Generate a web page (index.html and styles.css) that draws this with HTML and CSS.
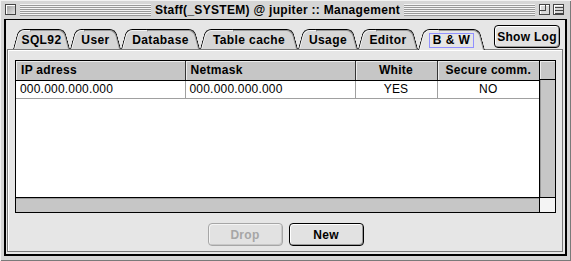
FILE: index.html
```html
<!DOCTYPE html>
<html lang="en">
<head>
    <meta charset="UTF-8">
    <title>Staff(_SYSTEM) @ jupiter :: Management</title>
    <link rel="stylesheet" href="styles.css">
</head>
<body>
    <div class="window">
        <div class="titlebar">
            <span class="box closebox"></span>
            <span class="stripes"></span>
            <span class="title">Staff(_SYSTEM) @ jupiter :: Management</span>
            <span class="stripes"></span>
            <span class="box zoombox"><span></span></span>
            <span class="box shadebox"></span>
        </div>
        <div class="frame">
            <div class="tabbar">
                <div class="tabs">
                    <div class="tab" style="width:57px">SQL92</div>
                    <div class="tab" style="width:51px">User</div>
                    <div class="tab" style="width:79px">Database</div>
                    <div class="tab" style="width:98px">Table cache</div>
                    <div class="tab" style="width:60px">Usage</div>
                    <div class="tab" style="width:60px">Editor</div>
                    <div class="tab selected" style="width:67px"><span class="focus">B &amp; W</span></div>
                </div>
                <button class="btn showlog">Show Log</button>
            </div>
            <div class="panel">
                <div class="grid">
                    <div class="list">
                        <table>
                            <thead>
                                <tr>
                                    <th class="col-ip">IP adress</th>
                                    <th class="col-mask">Netmask</th>
                                    <th class="col-white center">White</th>
                                    <th class="col-secure center">Secure comm.</th>
                                </tr>
                            </thead>
                            <tbody>
                                <tr>
                                    <td>000.000.000.000</td>
                                    <td>000.000.000.000</td>
                                    <td class="center">YES</td>
                                    <td class="center">NO</td>
                                </tr>
                            </tbody>
                        </table>
                    </div>
                    <div class="vscroll"><div class="vscroll-head"></div></div>
                    <div class="hscroll"></div>
                    <div class="corner"></div>
                </div>
                <div class="actions">
                    <button class="btn" disabled>Drop</button>
                    <button class="btn">New</button>
                </div>
            </div>
        </div>
    </div>
</body>
</html>
```

FILE: styles.css
```css
body {
    margin: 0;
    background: #fff;
    font-family: "Liberation Sans", Arial, sans-serif;
    color: #000;
}
.window {
    width: 571px;
    height: 261px;
    box-sizing: border-box;
    display: flex;
    flex-direction: column;
    padding: 0 4px 5px 4px;
    background: #d6d6d6;
    box-shadow: inset 1px 1px 0 #f2f2f2, inset -1px -1px 0 #7a7a7a;
}
.titlebar {
    height: 19px;
    margin: 0 -4px;
    padding: 0 7px 0 5px;
    display: flex;
    align-items: center;
}
.box {
    width: 9px;
    height: 9px;
    border: 1px solid #444;
    background: linear-gradient(135deg, #9a9a9a, #e4e4e4);
    box-shadow: inset 1px 1px 0 #fff;
    flex: none;
    position: relative;
}
.closebox {
    margin-right: 4px;
}
.zoombox {
    margin-left: 4px;
    background: #d8d8d8;
}
.zoombox span {
    position: absolute;
    left: 0;
    top: 0;
    width: 5px;
    height: 5px;
    border-right: 1px solid #444;
    border-bottom: 1px solid #444;
}
.shadebox {
    margin-left: 3px;
    background: repeating-linear-gradient(#d8d8d8 0 2px, #444 2px 3px);
}
.stripes {
    flex: 1;
    height: 12px;
    background: repeating-linear-gradient(#f4f4f4 0 1px, #999 1px 2px);
}
.title {
    padding: 0 4px;
    font-size: 12px;
    font-weight: bold;
    letter-spacing: 0.3px;
    white-space: nowrap;
}
.frame {
    flex: 1;
    display: flex;
    flex-direction: column;
    background: #e6e6e6;
    border: 2px solid #000;
    border-top-width: 1px;
}
.tabbar {
    height: 29px;
    display: flex;
    padding-left: 7px;
    position: relative;
    z-index: 1;
}
.tabs {
    display: flex;
    align-items: flex-end;
}
.tab {
    position: relative;
    z-index: 0;
    height: 20px;
    box-sizing: border-box;
    display: flex;
    align-items: center;
    justify-content: center;
    padding-top: 2px;
    font-size: 12px;
    font-weight: bold;
    letter-spacing: 0.4px;
    white-space: nowrap;
}
.tab::before,
.tab::after {
    content: '';
    position: absolute;
    top: 0;
    bottom: 0;
    width: 60%;
    z-index: -1;
    background: #d6d6d6;
    border-top: 1px solid #000;
}
.tab::before {
    left: 0;
    border-left: 1px solid #000;
    border-top-left-radius: 6px;
    transform-origin: bottom left;
    transform: skewX(-15deg);
    box-shadow: inset 1px 1px 0 #f4f4f4;
}
.tab::after {
    right: 0;
    border-right: 1px solid #000;
    border-top-right-radius: 6px;
    transform-origin: bottom right;
    transform: skewX(15deg);
    box-shadow: inset -1px 1px 0 #9a9a9a;
}
.tab.selected::before,
.tab.selected::after {
    background: #e6e6e6;
    bottom: -1px;
}
.tab.selected {
    padding-top: 3px;
}
.focus {
    padding: 0 3px;
    border: 1px solid #9090ff;
    line-height: 13px;
}
.btn {
    font-family: "Liberation Sans", Arial, sans-serif;
    font-size: 12px;
    font-weight: bold;
    letter-spacing: 0.3px;
    color: #000;
    background: #e2e2e2;
    border: 1px solid #000;
    border-radius: 4px;
    box-shadow: inset 1px 1px 0 #fff, inset -1px -1px 0 #9a9a9a;
    padding: 0;
    height: 23px;
}
.btn:disabled {
    color: #a6a6a6;
    border-color: #a6a6a6;
    box-shadow: inset 1px 1px 0 #f4f4f4, inset -1px -1px 0 #c8c8c8;
}
.showlog {
    width: 66px;
    margin: 5px 5px 0 auto;
}
.panel {
    flex: 1;
    display: flex;
    flex-direction: column;
    margin: 0 2px 2px 1px;
    padding: 10px 6px 0 7px;
    border: 1px solid #7a7a7a;
    background: #e6e6e6;
    box-shadow: inset 1px 1px 0 #fff;
}
.grid {
    height: 153px;
    box-sizing: border-box;
    display: grid;
    grid-template-columns: 1fr 16px;
    grid-template-rows: 1fr 15px;
    border: 1px solid #000;
    background: #fff;
}
.list {
    overflow: hidden;
}
table {
    width: 100%;
    border-collapse: collapse;
    table-layout: fixed;
    font-size: 12px;
}
th {
    height: 19px;
    box-sizing: border-box;
    padding: 0 5px;
    text-align: left;
    font-weight: bold;
    letter-spacing: 0.3px;
    background: #c6c6c6;
    border-right: 1px solid #333;
    border-bottom: 1px solid #000;
    box-shadow: inset 1px 1px 0 #ececec;
}
th:last-child {
    border-right: none;
}
td {
    height: 18px;
    box-sizing: border-box;
    padding: 0 4px;
    letter-spacing: 0.2px;
    border-right: 1px solid #a0a0a0;
    border-bottom: 1px solid #a0a0a0;
}
td:last-child {
    border-right: none;
}
.center {
    text-align: center;
}
.col-ip { width: 169px; }
.col-mask { width: 170px; }
.col-white { width: 82px; }
.vscroll {
    background: #c6c6c6;
    border-left: 1px solid #000;
    box-shadow: inset 1px 0 0 #9a9a9a;
}
.vscroll-head {
    height: 18px;
    border-bottom: 1px solid #000;
    box-shadow: inset 1px 1px 0 #ececec;
}
.hscroll {
    background: #c6c6c6;
    border-top: 1px solid #000;
    box-shadow: inset 0 1px 0 #9a9a9a;
}
.corner {
    background: #f4f4f4;
    border-top: 1px solid #000;
    border-left: 1px solid #000;
}
.actions {
    display: flex;
    justify-content: center;
    gap: 6px;
    margin-top: 10px;
}
.actions .btn {
    width: 75px;
}
```
